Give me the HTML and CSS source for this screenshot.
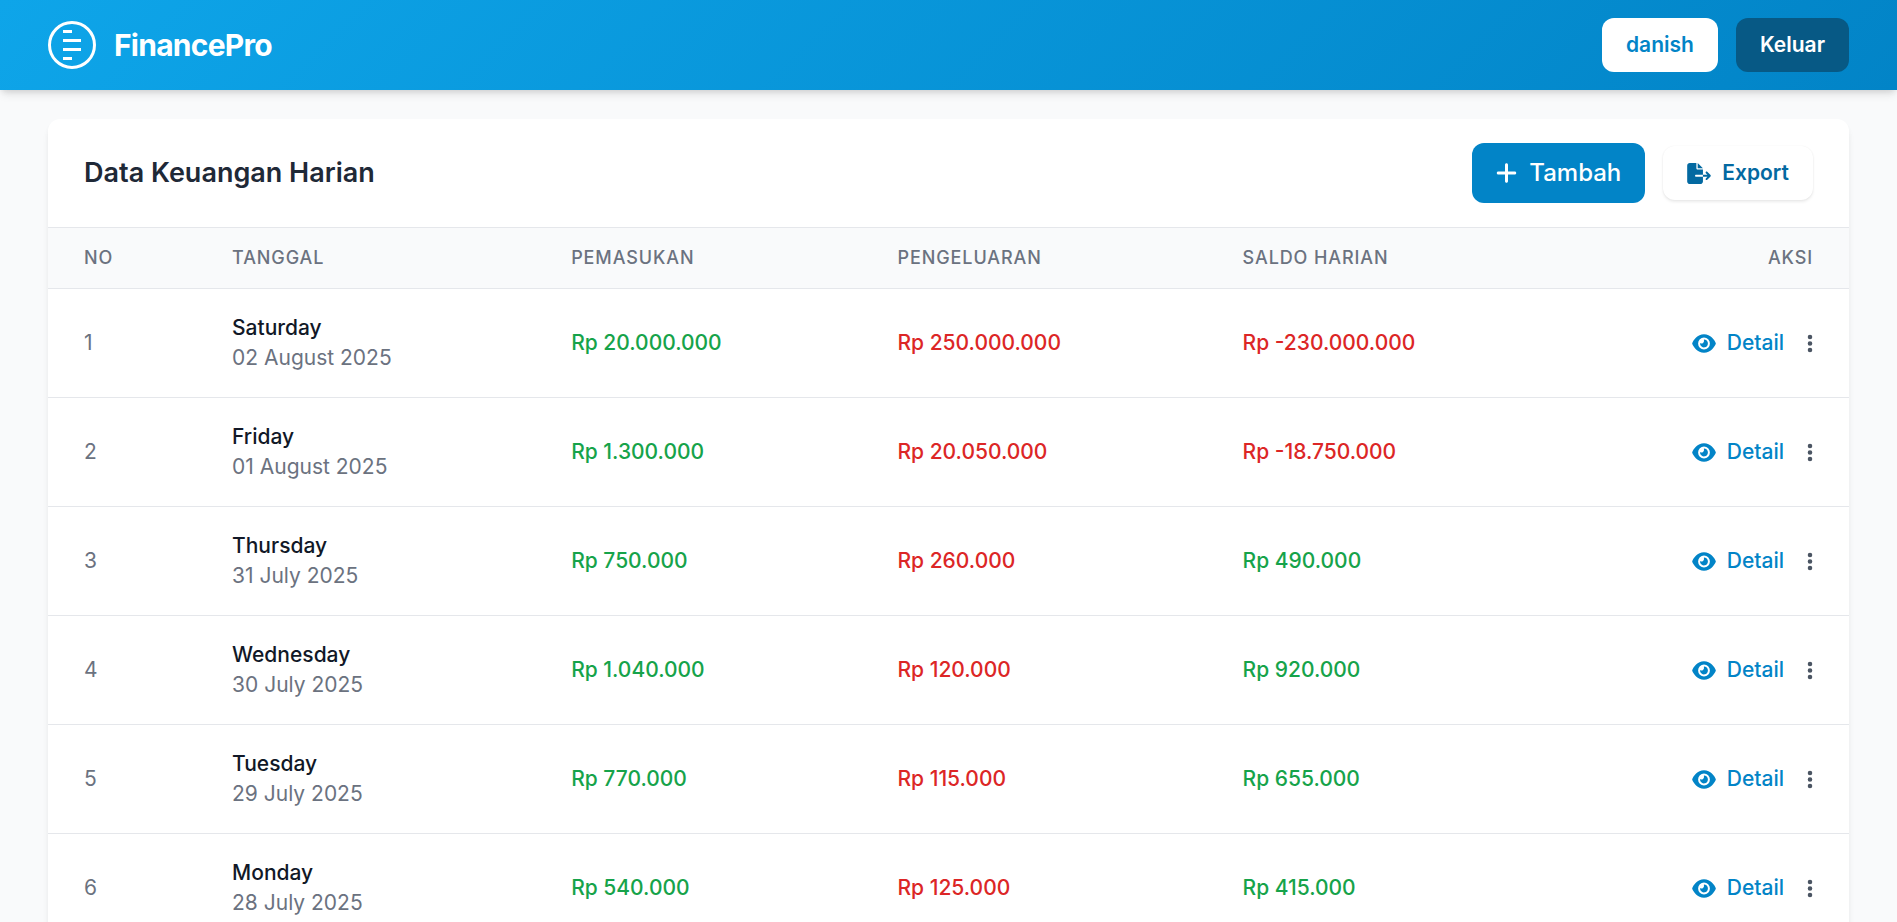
FILE: index.html
```html
<!DOCTYPE html>
<html lang="id">
<head>
<meta charset="utf-8">
<meta name="viewport" content="width=device-width, initial-scale=1">
<title>FinancePro</title>
<link rel="stylesheet" href="styles.css">
</head>
<body>
<svg class="sprite" aria-hidden="true">
  <symbol id="eye" viewBox="0 0 576 512"><path d="M288 32c-80.8 0-145.5 36.8-192.6 80.6C48.6 156 17.3 208 2.5 243.7c-3.3 7.9-3.3 16.7 0 24.6C17.3 304 48.6 356 95.4 399.4C142.5 443.2 207.2 480 288 480s145.5-36.8 192.6-80.6c46.8-43.5 78.1-95.4 93-131.1c3.3-7.9 3.3-16.7 0-24.6c-14.9-35.7-46.2-87.7-93-131.1C433.5 68.8 368.8 32 288 32zM144 256a144 144 0 1 1 288 0 144 144 0 1 1 -288 0zm144-64c0 35.3-28.7 64-64 64c-7.1 0-13.9-1.2-20.3-3.3c-5.5-1.8-11.9 1.6-11.7 7.4c.3 6.9 1.3 13.8 3.2 20.7c13.7 51.2 66.4 81.6 117.6 67.9s81.6-66.4 67.9-117.6c-11.1-41.5-47.8-69.4-88.6-71.1c-5.8-.2-9.2 6.1-7.4 11.7c2.1 6.4 3.3 13.2 3.3 20.3z"/></symbol>
  <symbol id="dots" viewBox="0 0 128 512"><path d="M64 360a56 56 0 1 0 0 112 56 56 0 1 0 0-112zm0-160a56 56 0 1 0 0 112 56 56 0 1 0 0-112zM120 96A56 56 0 1 0 8 96a56 56 0 1 0 112 0z"/></symbol>
</svg>

<header class="navbar">
  <a class="brand" href="#">
    <svg class="brand-logo" viewBox="0 0 48 48" fill="none" stroke="currentColor" stroke-width="3" aria-hidden="true">
      <circle cx="24" cy="24" r="22.5"/>
      <path d="M15 10.5h9M15 19.5h18M15 28.5h18M15 37.5h9"/>
    </svg>
    <span>FinancePro</span>
  </a>
  <nav class="nav-actions">
    <a class="btn btn-user" href="#">danish</a>
    <button class="btn btn-logout" type="button">Keluar</button>
  </nav>
</header>

<main class="page">
  <section class="card">
    <div class="card-header">
      <h1 class="card-title">Data Keuangan Harian</h1>
      <div class="card-actions">
        <button class="btn btn-add" type="button">
          <svg class="icon-plus" viewBox="0 0 448 512" aria-hidden="true"><path d="M256 80c0-17.7-14.3-32-32-32s-32 14.3-32 32V224H48c-17.7 0-32 14.3-32 32s14.3 32 32 32H192V432c0 17.7 14.3 32 32 32s32-14.3 32-32V288H400c17.7 0 32-14.3 32-32s-14.3-32-32-32H256V80z"/></svg>
          Tambah
        </button>
        <button class="btn btn-export" type="button">
          <svg class="icon" viewBox="0 0 576 512" aria-hidden="true"><path d="M0 64C0 28.7 28.7 0 64 0H224V128c0 17.7 14.3 32 32 32H384V288H216c-13.3 0-24 10.7-24 24s10.7 24 24 24H384V448c0 35.3-28.7 64-64 64H64c-35.3 0-64-28.7-64-64V64zM384 336V288H494.1l-39-39c-9.4-9.4-9.4-24.6 0-33.9s24.6-9.4 33.9 0l80 80c9.4 9.4 9.4 24.6 0 33.9l-80 80c-9.4 9.4-24.6 9.4-33.9 0s-9.4-24.6 0-33.9l39-39H384zm0-208H256V0L384 128z"/></svg>
          Export
        </button>
      </div>
    </div>
    <table class="table">
      <colgroup>
        <col class="col-no"><col class="col-date"><col class="col-in"><col class="col-out"><col>
      </colgroup>
      <thead>
        <tr><th scope="col">No</th><th scope="col">Tanggal</th><th scope="col">Pemasukan</th><th scope="col">Pengeluaran</th><th scope="col">Saldo Harian</th><th scope="col" class="right">Aksi</th></tr>
      </thead>
      <tbody>
        <tr>
          <td class="muted">1</td>
          <td><div class="day">Saturday</div><div class="muted">02 August 2025</div></td>
          <td class="amount plus">Rp 20.000.000</td><td class="amount minus">Rp 250.000.000</td><td class="amount minus">Rp -230.000.000</td>
          <td><div class="row-actions"><a class="detail" href="#"><svg class="icon" aria-hidden="true"><use href="#eye"/></svg>Detail</a><button class="more" type="button" aria-label="Menu"><svg class="icon-dots"><use href="#dots"/></svg></button></div></td>
        </tr>
        <tr>
          <td class="muted">2</td>
          <td><div class="day">Friday</div><div class="muted">01 August 2025</div></td>
          <td class="amount plus">Rp 1.300.000</td><td class="amount minus">Rp 20.050.000</td><td class="amount minus">Rp -18.750.000</td>
          <td><div class="row-actions"><a class="detail" href="#"><svg class="icon" aria-hidden="true"><use href="#eye"/></svg>Detail</a><button class="more" type="button" aria-label="Menu"><svg class="icon-dots"><use href="#dots"/></svg></button></div></td>
        </tr>
        <tr>
          <td class="muted">3</td>
          <td><div class="day">Thursday</div><div class="muted">31 July 2025</div></td>
          <td class="amount plus">Rp 750.000</td><td class="amount minus">Rp 260.000</td><td class="amount plus">Rp 490.000</td>
          <td><div class="row-actions"><a class="detail" href="#"><svg class="icon" aria-hidden="true"><use href="#eye"/></svg>Detail</a><button class="more" type="button" aria-label="Menu"><svg class="icon-dots"><use href="#dots"/></svg></button></div></td>
        </tr>
        <tr>
          <td class="muted">4</td>
          <td><div class="day">Wednesday</div><div class="muted">30 July 2025</div></td>
          <td class="amount plus">Rp 1.040.000</td><td class="amount minus">Rp 120.000</td><td class="amount plus">Rp 920.000</td>
          <td><div class="row-actions"><a class="detail" href="#"><svg class="icon" aria-hidden="true"><use href="#eye"/></svg>Detail</a><button class="more" type="button" aria-label="Menu"><svg class="icon-dots"><use href="#dots"/></svg></button></div></td>
        </tr>
        <tr>
          <td class="muted">5</td>
          <td><div class="day">Tuesday</div><div class="muted">29 July 2025</div></td>
          <td class="amount plus">Rp 770.000</td><td class="amount minus">Rp 115.000</td><td class="amount plus">Rp 655.000</td>
          <td><div class="row-actions"><a class="detail" href="#"><svg class="icon" aria-hidden="true"><use href="#eye"/></svg>Detail</a><button class="more" type="button" aria-label="Menu"><svg class="icon-dots"><use href="#dots"/></svg></button></div></td>
        </tr>
        <tr>
          <td class="muted">6</td>
          <td><div class="day">Monday</div><div class="muted">28 July 2025</div></td>
          <td class="amount plus">Rp 540.000</td><td class="amount minus">Rp 125.000</td><td class="amount plus">Rp 415.000</td>
          <td><div class="row-actions"><a class="detail" href="#"><svg class="icon" aria-hidden="true"><use href="#eye"/></svg>Detail</a><button class="more" type="button" aria-label="Menu"><svg class="icon-dots"><use href="#dots"/></svg></button></div></td>
        </tr>
      </tbody>
    </table>
  </section>
</main>
</body>
</html>
```
FILE: styles.css
```css
* { box-sizing: border-box; }

html { scrollbar-width: none; }

body {
  margin: 0;
  background: #f9fafb;
  color: #111827;
  font-family: Inter, "Liberation Sans", sans-serif;
  font-size: 21px;
  line-height: 30px;
}

a { color: inherit; text-decoration: none; }

svg { display: block; flex: none; fill: currentColor; }

.sprite { display: none; }

.navbar {
  display: flex;
  align-items: center;
  justify-content: space-between;
  padding: 18px 48px;
  background: linear-gradient(135deg, #0ea5e9 0%, #0284c7 100%);
  box-shadow: 0 6px 9px -2px rgba(0, 0, 0, 0.1), 0 3px 6px -2px rgba(0, 0, 0, 0.1);
  color: #fff;
}

.brand {
  display: flex;
  align-items: center;
  gap: 18px;
  font-size: 30px;
  font-weight: 700;
  line-height: 42px;
  letter-spacing: -0.025em;
}

.brand-logo { width: 48px; height: 48px; fill: none; }

.nav-actions, .card-actions {
  display: flex;
  align-items: center;
  gap: 18px;
}

.btn {
  display: flex;
  align-items: center;
  gap: 12px;
  padding: 12px 24px;
  border: 0;
  border-radius: 12px;
  font: inherit;
  font-weight: 600;
  cursor: pointer;
}

.btn-user { background: #fff; color: #0284c7; }

.btn-logout { background: #075985; color: #fff; }

.btn-add {
  background: #0284c7;
  color: #fff;
  font-size: 24px;
  font-weight: 500;
  line-height: 36px;
}

.btn-export {
  gap: 11px;
  background: #fff;
  color: #0369a1;
  box-shadow: 0 2px 3px rgba(0, 0, 0, 0.08), 0 0 2px rgba(0, 0, 0, 0.06);
}

.icon { width: 24px; height: 21px; }

.icon-plus { width: 21px; height: 24px; }

.icon-dots { width: 6px; height: 21px; }

.page { padding: 29px 48px; }

.card {
  overflow: hidden;
  border-radius: 12px;
  background: #fff;
  box-shadow: 0 6px 9px -2px rgba(0, 0, 0, 0.08), 0 3px 6px -2px rgba(0, 0, 0, 0.06);
}

.card-header {
  display: flex;
  align-items: center;
  justify-content: space-between;
  padding: 24px 36px;
}

.card-title {
  margin: 0;
  color: #1f2937;
  font-size: 27px;
  font-weight: 600;
  line-height: 42px;
}

.table {
  width: 100%;
  border-collapse: separate;
  border-spacing: 0;
  table-layout: fixed;
}

.col-no { width: 8.22%; }
.col-date { width: 18.83%; }
.col-in { width: 18.12%; }
.col-out { width: 19.16%; }

.table th {
  padding: 18px 36px;
  border-top: 1px solid #e5e7eb;
  background: #f9fafb;
  color: #6b7280;
  font-size: 18px;
  font-weight: 500;
  line-height: 24px;
  letter-spacing: 0.05em;
  text-align: left;
  text-transform: uppercase;
}

.table .right { text-align: right; }

.table td {
  padding: 24px 36px;
  border-top: 1px solid #e5e7eb;
  white-space: nowrap;
}

.muted { color: #6b7280; }

.day, .amount { font-weight: 500; }

.plus { color: #16a34a; }

.minus { color: #dc2626; }

.row-actions {
  display: flex;
  align-items: center;
  justify-content: flex-end;
  gap: 23px;
}

.detail {
  display: flex;
  align-items: center;
  gap: 11px;
  color: #0284c7;
  font-weight: 500;
}

.more {
  padding: 0;
  border: 0;
  background: none;
  color: #4b5563;
  cursor: pointer;
}
```
